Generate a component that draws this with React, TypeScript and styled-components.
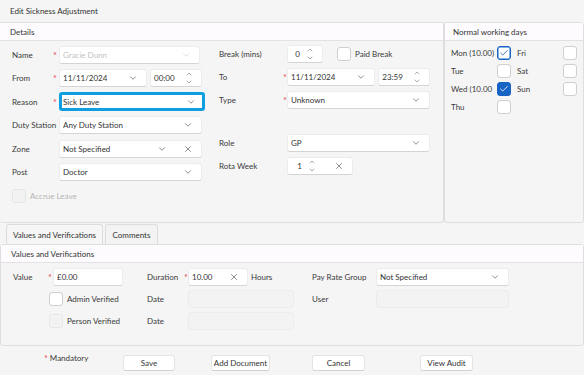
import styled, { createGlobalStyle } from 'styled-components';
import { ChevronDown, ChevronUp, X, Check } from 'lucide-react';

const GlobalStyle = createGlobalStyle`
  html, body {
    margin: 0;
    padding: 0;
    background: #f5f5f5;
  }
  body {
    font-family: Lato, "Noto Sans", sans-serif;
    font-size: 8px;
    color: #333;
  }
  * {
    box-sizing: border-box;
  }
`;

const Page = styled.div`
  width: 584px;
  height: 375px;
  overflow: hidden;
  display: flex;
  flex-direction: column;
  background: #f5f5f5;
`;

const TitleBar = styled.div`
  height: 22px;
  padding-left: 10px;
  display: flex;
  align-items: center;
  color: #333;
`;

const TopArea = styled.div`
  height: 201px;
  display: flex;
`;

const Panel = styled.div<{ $width?: number }>`
  width: ${(p) => (p.$width ? `${p.$width}px` : 'auto')};
  flex: ${(p) => (p.$width ? '0 0 auto' : '1')};
  border: 1px solid #dedede;
  border-left: ${(p) => (p.$width ? 'none' : '1px solid #dedede')};
  border-radius: 0 3px 3px 3px;
  display: flex;
  flex-direction: column;
`;

const PanelHeader = styled.div<{ $pad?: number }>`
  height: 18px;
  background: #fdfbfd;
  border-bottom: 1px solid #e2e2e2;
  padding-left: ${(p) => p.$pad ?? 10}px;
  display: flex;
  align-items: center;
`;

const DetailsBody = styled.div`
  display: flex;
  padding-top: 4px;
`;

const FormColumn = styled.div<{ $cols: string; $rows: string; $left: number; $gap: number }>`
  display: grid;
  grid-template-columns: ${(p) => p.$cols};
  grid-template-rows: ${(p) => p.$rows};
  row-gap: ${(p) => p.$gap}px;
  margin-left: ${(p) => p.$left}px;
  align-items: center;
`;

const Label = styled.div<{ $muted?: boolean; $clip?: boolean }>`
  color: ${(p) => (p.$muted ? '#b5b5b5' : '#3a3a3a')};
  white-space: nowrap;
  overflow: ${(p) => (p.$clip ? 'hidden' : 'visible')};
`;

const Star = styled.span`
  color: #e5484d;
  font-size: 9px;
  line-height: 1;
  align-self: center;
  padding-top: 1px;
`;

const Field = styled.div<{ $w?: number; $disabled?: boolean; $focus?: boolean; $empty?: boolean }>`
  width: ${(p) => (p.$w ? `${p.$w}px` : '100%')};
  height: ${(p) => (p.$focus ? 19 : 18)}px;
  background: ${(p) => (p.$empty ? '#f3f3f3' : '#fff')};
  border: ${(p) => (p.$focus ? '3px solid #0f9fe0' : '1px solid #ececec')};
  border-bottom-color: ${(p) => (p.$focus ? '#0f9fe0' : p.$empty ? '#ececec' : '#d4d4d4')};
  border-radius: 3px;
  display: flex;
  align-items: center;
  padding: 0 ${(p) => (p.$focus ? 6 : 8)}px 0 ${(p) => (p.$focus ? 1 : 3)}px;
  color: ${(p) => (p.$disabled ? '#c2c2c2' : '#333')};
  gap: 6px;
`;

const FieldText = styled.span<{ $right?: boolean }>`
  flex: 1;
  text-align: ${(p) => (p.$right ? 'right' : 'left')};
  white-space: nowrap;
  overflow: hidden;
`;

const Spinner = styled.span`
  display: flex;
  flex-direction: column;
  align-items: center;
  color: #666;
  line-height: 0;
`;

const IconBox = styled.span<{ $muted?: boolean }>`
  display: flex;
  color: ${(p) => (p.$muted ? '#c8c8c8' : '#555')};
`;

const Pair = styled.div`
  display: flex;
  gap: 3px;
  align-items: center;
`;

const CheckRow = styled.div<{ $indent?: number }>`
  display: flex;
  align-items: center;
  gap: 4px;
  padding-left: ${(p) => p.$indent ?? 0}px;
`;

const Box = styled.span<{ $state?: 'on' | 'filled' | 'disabled' }>`
  width: 14px;
  height: 14px;
  flex: 0 0 14px;
  border-radius: 3px;
  display: flex;
  align-items: center;
  justify-content: center;
  background: ${(p) =>
    p.$state === 'filled' ? '#1864c4' : p.$state === 'disabled' ? '#f2f2f2' : '#fff'};
  border: 1px solid
    ${(p) =>
      p.$state === 'on' ? '#1864c4' : p.$state === 'filled' ? '#1864c4' : p.$state === 'disabled' ? '#e6e6e6' : '#d0d0d0'};
  ${(p) => (p.$state === 'on' ? 'box-shadow: inset 0 0 0 0.5px #1864c4;' : '')}
  color: ${(p) => (p.$state === 'filled' ? '#fff' : '#1864c4')};
`;

const DaysGrid = styled.div`
  display: grid;
  grid-template-columns: 46px 20px 46px 14px;
  grid-auto-rows: 18px;
  padding: 3px 0 0 6px;
  align-items: center;
`;

const Tabs = styled.div`
  height: 21px;
  display: flex;
  align-items: flex-end;
  padding-left: 6px;
  gap: 2px;
`;

const Tab = styled.div<{ $w: number; $active?: boolean }>`
  width: ${(p) => p.$w}px;
  height: 20px;
  border: 1px solid #dcdcdc;
  border-bottom: none;
  border-radius: 3px 3px 0 0;
  background: ${(p) => (p.$active ? '#f6f6f6' : '#f3f3f3')};
  display: flex;
  align-items: center;
  justify-content: center;
  color: #333;
  white-space: nowrap;
`;

const ValuesPanel = styled.div`
  height: 102px;
  border: 1px solid #dedede;
  border-radius: 3px;
  display: flex;
  flex-direction: column;
`;

const ValuesGrid = styled.div`
  display: grid;
  grid-template-columns: 35px 5px 70px 24px 37px 4px 106px 18px 64px 133px;
  grid-template-rows: 19px 19px 19px;
  row-gap: 3px;
  padding: 4px 0 0 12px;
  align-items: center;
`;

const Cell = styled.div<{ $col: string }>`
  grid-column: ${(p) => p.$col};
  display: flex;
  align-items: center;
  min-width: 0;
`;

const Footer = styled.div`
  flex: 1;
  display: flex;
  align-items: center;
  padding-left: 44px;
`;

const Mandatory = styled.div`
  width: 44px;
  display: flex;
  gap: 2px;
  align-items: flex-start;
  margin-top: -5px;
`;

const Button = styled.button<{ $w: number; $ml: number }>`
  width: ${(p) => p.$w}px;
  height: 16px;
  margin-left: ${(p) => p.$ml}px;
  margin-top: 4px;
  background: #fff;
  border: 1px solid #e4e4e4;
  border-bottom-color: #d2d2d2;
  border-radius: 3px;
  font: inherit;
  color: #333;
  padding: 0;
  white-space: nowrap;
`;

const Chevron = ({ muted }: { muted?: boolean }) => (
  <IconBox $muted={muted}>
    <ChevronDown size={10} strokeWidth={1.6} />
  </IconBox>
);

const Clear = () => (
  <IconBox>
    <X size={10} strokeWidth={1.6} />
  </IconBox>
);

const Spin = () => (
  <Spinner>
    <ChevronUp size={8} strokeWidth={1.6} />
    <ChevronDown size={8} strokeWidth={1.6} />
  </Spinner>
);

const days: { label: string; state?: 'on' | 'filled' }[][] = [
  [{ label: 'Mon (10.00)', state: 'on' }, { label: 'Fri' }],
  [{ label: 'Tue' }, { label: 'Sat' }],
  [{ label: 'Wed (10.00', state: 'filled' }, { label: 'Sun' }],
  [{ label: 'Thu' }],
];

export default function App() {
  return (
    <Page>
      <GlobalStyle />
      <TitleBar>Edit Sickness Adjustment</TitleBar>
      <TopArea>
        <Panel $width={444}>
          <PanelHeader>Details</PanelHeader>
          <DetailsBody>
            <FormColumn $cols="41px 6px 146px" $rows="repeat(7, 19px)" $gap={4.5} $left={12}>
              <Label>Name</Label>
              <Star>*</Star>
              <Field $w={141} $disabled>
                <FieldText>Gracie Dunn</FieldText>
                <Chevron muted />
              </Field>

              <Label>From</Label>
              <Star>*</Star>
              <Pair>
                <Field $w={88}>
                  <FieldText>11/11/2024</FieldText>
                  <Chevron />
                </Field>
                <Field $w={52}>
                  <FieldText>00:00</FieldText>
                  <Spin />
                </Field>
              </Pair>

              <Label>Reason</Label>
              <Star>*</Star>
              <Field $focus>
                <FieldText>Sick Leave</FieldText>
                <Chevron />
              </Field>

              <Label>Duty Station</Label>
              <span />
              <Field $w={143}>
                <FieldText>Any Duty Station</FieldText>
                <Chevron />
              </Field>

              <Label>Zone</Label>
              <span />
              <Field $w={143}>
                <FieldText>Not Specified</FieldText>
                <Chevron />
                <span style={{ width: 4 }} />
                <Clear />
              </Field>

              <Label>Post</Label>
              <span />
              <Field $w={143}>
                <FieldText>Doctor</FieldText>
                <Chevron />
              </Field>

              <Cell $col="1 / 4">
                <CheckRow>
                  <Box $state="disabled" />
                  <Label $muted>Accrue Leave</Label>
                </CheckRow>
              </Cell>
            </FormColumn>

            <FormColumn $cols="64px 4px 143px" $rows="18px 18px 18px 15px 18px 18px" $gap={5} $left={14}>
              <Label>Break (mins)</Label>
              <span />
              <Pair>
                <Field $w={36}>
                  <FieldText $right>0</FieldText>
                  <Spin />
                </Field>
                <span style={{ width: 8 }} />
                <CheckRow>
                  <Box />
                  <Label>Paid Break</Label>
                </CheckRow>
              </Pair>

              <Label>To</Label>
              <Star>*</Star>
              <Pair>
                <Field $w={89}>
                  <FieldText>11/11/2024</FieldText>
                  <Chevron />
                </Field>
                <Field $w={52}>
                  <FieldText>23:59</FieldText>
                  <Spin />
                </Field>
              </Pair>

              <Label>Type</Label>
              <Star>*</Star>
              <Field>
                <FieldText>Unknown</FieldText>
                <Chevron />
              </Field>

              <span />
              <span />
              <span />

              <Label>Role</Label>
              <span />
              <Field>
                <FieldText>GP</FieldText>
                <Chevron />
              </Field>

              <Label>Rota Week</Label>
              <span />
              <Field $w={66}>
                <FieldText $right>1</FieldText>
                <Spin />
                <span style={{ width: 6 }} />
                <Clear />
              </Field>
            </FormColumn>
          </DetailsBody>
        </Panel>

        <Panel>
          <PanelHeader $pad={8}>Normal working days</PanelHeader>
          <DaysGrid>
            {days.map((row) =>
              row.map((d) => [
                <Label key={d.label} $clip>
                  {d.label}
                </Label>,
                <Box key={d.label + '-box'} $state={d.state}>
                  {d.state && <Check size={10} strokeWidth={2} />}
                </Box>,
              ])
            )}
          </DaysGrid>
        </Panel>
      </TopArea>

      <Tabs>
        <Tab $w={97} $active>
          Values and Verifications
        </Tab>
        <Tab $w={53}>Comments</Tab>
      </Tabs>

      <ValuesPanel>
        <PanelHeader>Values and Verifications</PanelHeader>
        <ValuesGrid>
          <Cell $col="1">
            <Label>Value</Label>
          </Cell>
          <Cell $col="2">
            <Star>*</Star>
          </Cell>
          <Cell $col="3">
            <Field>
              <FieldText>£0.00</FieldText>
            </Field>
          </Cell>
          <Cell $col="5">
            <Label>Duration</Label>
          </Cell>
          <Cell $col="6">
            <Star>*</Star>
          </Cell>
          <Cell $col="7">
            <Pair>
              <Field $w={60}>
                <FieldText>10.00</FieldText>
                <Clear />
              </Field>
              <Label>Hours</Label>
            </Pair>
          </Cell>
          <Cell $col="9">
            <Label>Pay Rate Group</Label>
          </Cell>
          <Cell $col="10">
            <Field>
              <FieldText>Not Specified</FieldText>
              <Chevron />
            </Field>
          </Cell>

          <Cell $col="1 / 4">
            <CheckRow $indent={36}>
              <Box />
              <Label>Admin Verified</Label>
            </CheckRow>
          </Cell>
          <Cell $col="5">
            <Label>Date</Label>
          </Cell>
          <Cell $col="7">
            <Field $empty />
          </Cell>
          <Cell $col="9">
            <Label>User</Label>
          </Cell>
          <Cell $col="10">
            <Field $empty />
          </Cell>

          <Cell $col="1 / 4">
            <CheckRow $indent={36}>
              <Box $state="disabled" />
              <Label>Person Verified</Label>
            </CheckRow>
          </Cell>
          <Cell $col="5">
            <Label>Date</Label>
          </Cell>
          <Cell $col="7">
            <Field $empty />
          </Cell>
        </ValuesGrid>
      </ValuesPanel>

      <Footer>
        <Mandatory>
          <Star>*</Star>
          <Label>Mandatory</Label>
        </Mandatory>
        <Button $w={52} $ml={35}>Save</Button>
        <Button $w={59} $ml={36}>Add Document</Button>
        <Button $w={53} $ml={42}>Cancel</Button>
        <Button $w={53} $ml={55}>View Audit</Button>
      </Footer>
    </Page>
  );
}
